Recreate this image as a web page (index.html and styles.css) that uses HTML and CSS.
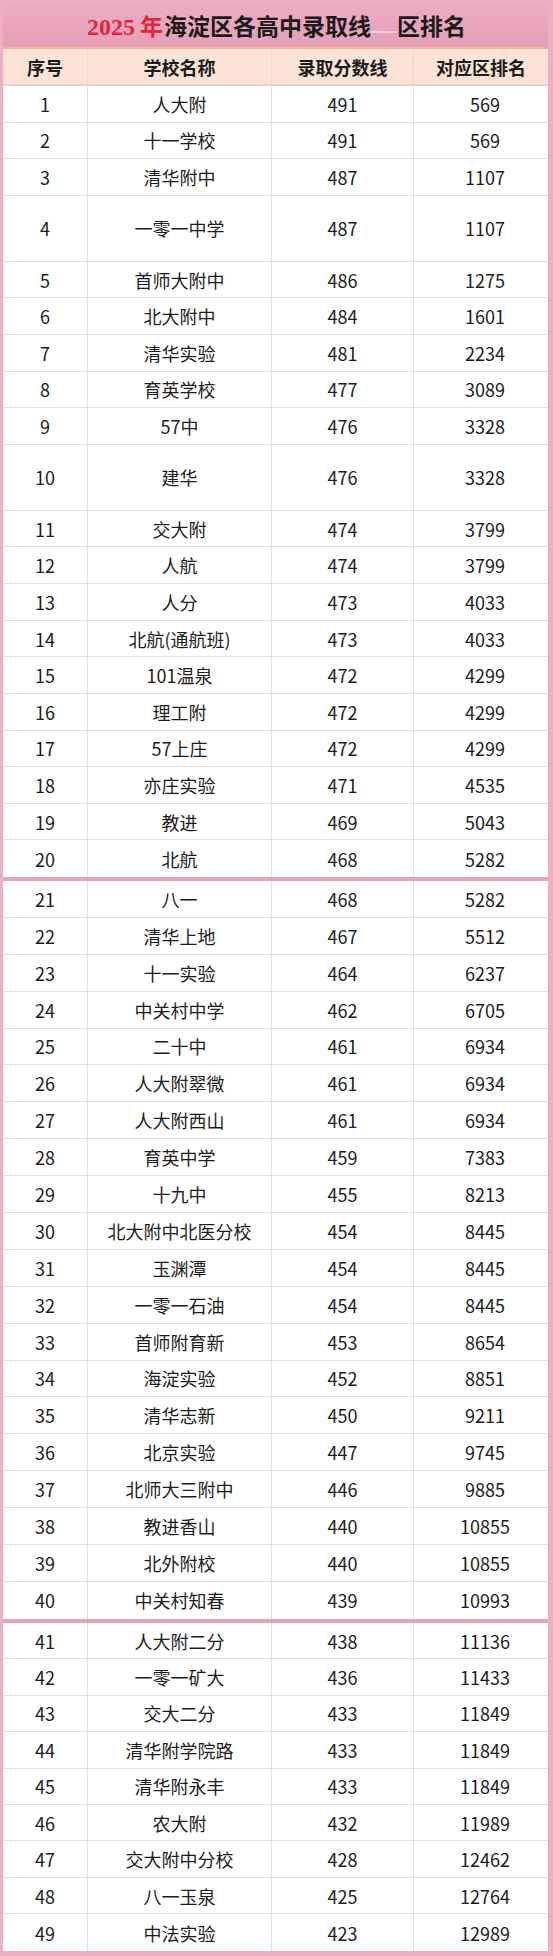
FILE: index.html
```html
<!DOCTYPE html>
<html lang="zh-CN">
<head>
<meta charset="utf-8">
<title>2025年海淀区各高中录取线</title>
<link rel="stylesheet" href="styles.css">
</head>
<body>
<div class="frame">
  <div class="title"><span class="red"><span class="yr">2025</span> 年</span>海淀区各高中录取线<span class="dash"></span>区排名</div>
  <div class="row head"><div class="c">序号</div><div class="c">学校名称</div><div class="c">录取分数线</div><div class="c last">对应区排名</div></div>
  <div class="sec s1">
    <div class="row"><div class="c">1</div><div class="c">人大附</div><div class="c">491</div><div class="c last">569</div></div>
    <div class="row"><div class="c">2</div><div class="c">十一学校</div><div class="c">491</div><div class="c last">569</div></div>
    <div class="row"><div class="c">3</div><div class="c">清华附中</div><div class="c">487</div><div class="c last">1107</div></div>
    <div class="row tall"><div class="c">4</div><div class="c">一零一中学</div><div class="c">487</div><div class="c last">1107</div></div>
    <div class="row"><div class="c">5</div><div class="c">首师大附中</div><div class="c">486</div><div class="c last">1275</div></div>
    <div class="row"><div class="c">6</div><div class="c">北大附中</div><div class="c">484</div><div class="c last">1601</div></div>
    <div class="row"><div class="c">7</div><div class="c">清华实验</div><div class="c">481</div><div class="c last">2234</div></div>
    <div class="row"><div class="c">8</div><div class="c">育英学校</div><div class="c">477</div><div class="c last">3089</div></div>
    <div class="row"><div class="c">9</div><div class="c">57中</div><div class="c">476</div><div class="c last">3328</div></div>
    <div class="row tall"><div class="c">10</div><div class="c">建华</div><div class="c">476</div><div class="c last">3328</div></div>
    <div class="row"><div class="c">11</div><div class="c">交大附</div><div class="c">474</div><div class="c last">3799</div></div>
    <div class="row"><div class="c">12</div><div class="c">人航</div><div class="c">474</div><div class="c last">3799</div></div>
    <div class="row"><div class="c">13</div><div class="c">人分</div><div class="c">473</div><div class="c last">4033</div></div>
    <div class="row"><div class="c">14</div><div class="c">北航(通航班)</div><div class="c">473</div><div class="c last">4033</div></div>
    <div class="row"><div class="c">15</div><div class="c">101温泉</div><div class="c">472</div><div class="c last">4299</div></div>
    <div class="row"><div class="c">16</div><div class="c">理工附</div><div class="c">472</div><div class="c last">4299</div></div>
    <div class="row"><div class="c">17</div><div class="c">57上庄</div><div class="c">472</div><div class="c last">4299</div></div>
    <div class="row"><div class="c">18</div><div class="c">亦庄实验</div><div class="c">471</div><div class="c last">4535</div></div>
    <div class="row"><div class="c">19</div><div class="c">教进</div><div class="c">469</div><div class="c last">5043</div></div>
    <div class="row end"><div class="c">20</div><div class="c">北航</div><div class="c">468</div><div class="c last">5282</div></div>
  </div>
  <div class="sep"></div>
  <div class="sec s2">
    <div class="row"><div class="c">21</div><div class="c">八一</div><div class="c">468</div><div class="c last">5282</div></div>
    <div class="row"><div class="c">22</div><div class="c">清华上地</div><div class="c">467</div><div class="c last">5512</div></div>
    <div class="row"><div class="c">23</div><div class="c">十一实验</div><div class="c">464</div><div class="c last">6237</div></div>
    <div class="row"><div class="c">24</div><div class="c">中关村中学</div><div class="c">462</div><div class="c last">6705</div></div>
    <div class="row"><div class="c">25</div><div class="c">二十中</div><div class="c">461</div><div class="c last">6934</div></div>
    <div class="row"><div class="c">26</div><div class="c">人大附翠微</div><div class="c">461</div><div class="c last">6934</div></div>
    <div class="row"><div class="c">27</div><div class="c">人大附西山</div><div class="c">461</div><div class="c last">6934</div></div>
    <div class="row"><div class="c">28</div><div class="c">育英中学</div><div class="c">459</div><div class="c last">7383</div></div>
    <div class="row"><div class="c">29</div><div class="c">十九中</div><div class="c">455</div><div class="c last">8213</div></div>
    <div class="row"><div class="c">30</div><div class="c">北大附中北医分校</div><div class="c">454</div><div class="c last">8445</div></div>
    <div class="row"><div class="c">31</div><div class="c">玉渊潭</div><div class="c">454</div><div class="c last">8445</div></div>
    <div class="row"><div class="c">32</div><div class="c">一零一石油</div><div class="c">454</div><div class="c last">8445</div></div>
    <div class="row"><div class="c">33</div><div class="c">首师附育新</div><div class="c">453</div><div class="c last">8654</div></div>
    <div class="row"><div class="c">34</div><div class="c">海淀实验</div><div class="c">452</div><div class="c last">8851</div></div>
    <div class="row"><div class="c">35</div><div class="c">清华志新</div><div class="c">450</div><div class="c last">9211</div></div>
    <div class="row"><div class="c">36</div><div class="c">北京实验</div><div class="c">447</div><div class="c last">9745</div></div>
    <div class="row"><div class="c">37</div><div class="c">北师大三附中</div><div class="c">446</div><div class="c last">9885</div></div>
    <div class="row"><div class="c">38</div><div class="c">教进香山</div><div class="c">440</div><div class="c last">10855</div></div>
    <div class="row"><div class="c">39</div><div class="c">北外附校</div><div class="c">440</div><div class="c last">10855</div></div>
    <div class="row end"><div class="c">40</div><div class="c">中关村知春</div><div class="c">439</div><div class="c last">10993</div></div>
  </div>
  <div class="sep"></div>
  <div class="sec s3">
    <div class="row"><div class="c">41</div><div class="c">人大附二分</div><div class="c">438</div><div class="c last">11136</div></div>
    <div class="row"><div class="c">42</div><div class="c">一零一矿大</div><div class="c">436</div><div class="c last">11433</div></div>
    <div class="row"><div class="c">43</div><div class="c">交大二分</div><div class="c">433</div><div class="c last">11849</div></div>
    <div class="row"><div class="c">44</div><div class="c">清华附学院路</div><div class="c">433</div><div class="c last">11849</div></div>
    <div class="row"><div class="c">45</div><div class="c">清华附永丰</div><div class="c">433</div><div class="c last">11849</div></div>
    <div class="row"><div class="c">46</div><div class="c">农大附</div><div class="c">432</div><div class="c last">11989</div></div>
    <div class="row"><div class="c">47</div><div class="c">交大附中分校</div><div class="c">428</div><div class="c last">12462</div></div>
    <div class="row"><div class="c">48</div><div class="c">八一玉泉</div><div class="c">425</div><div class="c last">12764</div></div>
    <div class="row end"><div class="c">49</div><div class="c">中法实验</div><div class="c">423</div><div class="c last">12989</div></div>
  </div>
</div>
</body>
</html>
```

FILE: styles.css
```css
html, body {
  margin: 0;
  padding: 0;
  background: #f0b3c7;
}
.frame {
  width: 553px;
  height: 1956px;
  box-sizing: border-box;
  padding: 3px 5px 5px 3px;
  background: #eeafc4;
  font-family: "Noto Sans CJK SC", "Noto Sans", sans-serif;
  color: #1c1c1c;
}
.title {
  height: 44px;
  display: flex;
  align-items: center;
  justify-content: center;
  background: linear-gradient(#edacc2, #e59fb7);
  font-size: 23px;
  font-weight: 700;
  letter-spacing: 0;
  color: #1a1a1a;
  padding-left: 2px;
}
.red {
  color: #e2263b;
  margin-right: 1px;
}
.yr {
  font-family: "Liberation Serif", serif;
  font-weight: 700;
  font-size: 24px;
}
.dash {
  display: inline-block;
  width: 26px;
  height: 2px;
  margin: 14px 0 0 0;
  background: #f3cfdb;
  align-self: center;
}
.row {
  display: grid;
  grid-template-columns: 85px 184px 142px 134px;
  box-sizing: border-box;
  background: #fff;
  border-bottom: 1px solid #e6dedb;
}
.row .c {
  display: flex;
  align-items: center;
  justify-content: center;
  border-right: 1px solid #e6dedb;
  font-size: 18px;
  white-space: nowrap;
}
.row .c.last {
  border-right: none;
  padding-left: 8px;
}
.head {
  height: 39px;
  background: #fde3d5;
  border-top: 2px solid #f2b394;
  border-bottom: 2px solid #f3c9cc;
}
.head .c {
  font-weight: 700;
  border-right-color: #f7d4c6;
}
.head .c.last {
  padding-left: 0;
}
.s1 .row { height: 36.61px; }
.s1 .row.tall { height: 66px; }
.s2 .row { height: 36.9px; }
.s3 .row { height: 36.44px; }
.row.end { border-bottom: none; }
.sep {
  height: 4px;
  background: #e6a3b9;
}
```
